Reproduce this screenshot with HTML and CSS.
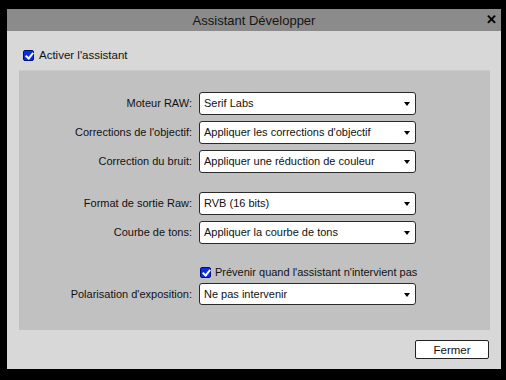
FILE: index.html
```html
<!DOCTYPE html>
<html lang="fr">
<head>
  <meta charset="UTF-8" />
  <title>Assistant Développer</title>
  <link rel="stylesheet" href="styles.css">
</head>
<body>
  <div class="dialog">
    <div class="titlebar">
      <span class="title">Assistant Développer</span>
      <span class="close">&#x2715;</span>
    </div>

    <div class="content">
      <label class="check-row">
        <span class="checkbox"></span>
        <span>Activer l'assistant</span>
      </label>

      <div class="panel">
        <div class="form">
          <span class="label">Moteur RAW:</span>
          <div class="dropdown">Serif Labs</div>

          <span class="label">Corrections de l'objectif:</span>
          <div class="dropdown">Appliquer les corrections d'objectif</div>

          <span class="label">Correction du bruit:</span>
          <div class="dropdown">Appliquer une réduction de couleur</div>

          <span class="label spaced">Format de sortie Raw:</span>
          <div class="dropdown spaced">RVB (16 bits)</div>

          <span class="label">Courbe de tons:</span>
          <div class="dropdown">Appliquer la courbe de tons</div>

          <span class="spaced-check"></span>
          <label class="check-row inner spaced-check">
            <span class="checkbox"></span>
            <span>Prévenir quand l'assistant n'intervient pas</span>
          </label>

          <span class="label">Polarisation d'exposition:</span>
          <div class="dropdown">Ne pas intervenir</div>
        </div>
      </div>

      <div class="footer">
        <button class="button">Fermer</button>
      </div>
    </div>
  </div>
</body>
</html>
```

FILE: styles.css
```css
* {
  margin: 0;
  padding: 0;
  box-sizing: border-box;
}

body {
  background: #000;
  font-family: "Liberation Sans", Arial, sans-serif;
  font-size: 11px;
  color: #111;
  width: 506px;
  height: 380px;
  overflow: hidden;
}

.dialog {
  margin: 9px 0 0 7px;
  width: 494px;
  height: 360px;
  background: #d8d8d8;
  display: flex;
  flex-direction: column;
}

.titlebar {
  height: 22px;
  background: #8b8b8b;
  display: flex;
  align-items: center;
  justify-content: center;
  position: relative;
}

.title {
  font-size: 13px;
  color: #151515;
}

.close {
  position: absolute;
  right: 4px;
  top: 3px;
  font-size: 13px;
  font-weight: bold;
  color: #000;
}

.content {
  flex: 1;
  padding: 16px 11px 10px 12px;
  display: flex;
  flex-direction: column;
}

.check-row {
  display: flex;
  align-items: center;
  height: 16px;
  gap: 5px;
  padding-left: 4px;
  font-size: 11.5px;
  white-space: nowrap;
}

.checkbox {
  flex: none;
  width: 11px;
  height: 11px;
  border-radius: 2px;
  background: #0d2fe0;
  border: 1px solid #001070;
  position: relative;
}

.checkbox::after {
  content: "";
  position: absolute;
  left: 3px;
  top: 0px;
  width: 3px;
  height: 6px;
  border: solid #fff;
  border-width: 0 2px 2px 0;
  transform: rotate(40deg);
}

.panel {
  margin-top: 7px;
  height: 260px;
  background: #c1c1c1;
  border-top: 1px solid #cbcbcb;
  padding-top: 21px;
}

.form {
  display: grid;
  grid-template-columns: 173px 217px;
  column-gap: 7px;
  row-gap: 6.5px;
  align-items: center;
}

.label {
  text-align: right;
  white-space: nowrap;
}

.dropdown {
  height: 22.5px;
  background: #fff;
  border: 1px solid #2a2a2a;
  border-radius: 3px;
  padding-left: 4px;
  display: flex;
  align-items: center;
  position: relative;
  white-space: nowrap;
}

.dropdown::after {
  content: "";
  position: absolute;
  right: 5px;
  top: 9px;
  border-left: 3px solid transparent;
  border-right: 3px solid transparent;
  border-top: 4px solid #000;
}

.spaced {
  margin-top: 13px;
}

.spaced-check {
  margin-top: 14px;
}

.check-row.inner {
  padding-left: 1px;
  gap: 4px;
  font-size: 11px;
  margin-bottom: -4px;
}

.footer {
  margin-top: 10px;
  display: flex;
  justify-content: flex-end;
  padding-right: 1px;
}

.button {
  width: 74px;
  height: 19px;
  background: #fff;
  border: 1px solid #222;
  border-radius: 2px;
  font-family: "Liberation Sans", Arial, sans-serif;
  font-size: 11.5px;
  color: #111;
}
```
